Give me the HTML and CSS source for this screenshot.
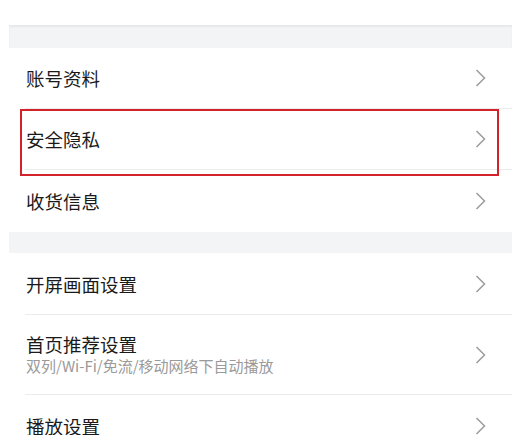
FILE: index.html
```html
<!DOCTYPE html>
<html lang="zh-CN">
<head>
    <meta charset="UTF-8">
    <title>设置</title>
    <link rel="stylesheet" href="styles.css">
</head>
<body>
    <div class="page">
        <div class="band band-top"></div>

        <div class="group">
            <div class="row">
                <div class="row-inner">
                    <span class="title">账号资料</span>
                    <svg class="chevron" viewBox="0 0 10 18"><path d="M1 1 L9 9 L1 17"/></svg>
                </div>
            </div>
            <div class="row highlighted">
                <div class="row-inner">
                    <span class="title">安全隐私</span>
                    <svg class="chevron" viewBox="0 0 10 18"><path d="M1 1 L9 9 L1 17"/></svg>
                </div>
                <div class="mark"></div>
            </div>
            <div class="row last big">
                <div class="row-inner">
                    <span class="title">收货信息</span>
                    <svg class="chevron" viewBox="0 0 10 18"><path d="M1 1 L9 9 L1 17"/></svg>
                </div>
            </div>
        </div>

        <div class="band"></div>

        <div class="group">
            <div class="row big">
                <div class="row-inner">
                    <span class="title">开屏画面设置</span>
                    <svg class="chevron" viewBox="0 0 10 18"><path d="M1 1 L9 9 L1 17"/></svg>
                </div>
            </div>
            <div class="row tall">
                <div class="row-inner">
                    <div class="text">
                        <span class="title">首页推荐设置</span>
                        <span class="sub">双列/Wi-Fi/免流/移动网络下自动播放</span>
                    </div>
                    <svg class="chevron" viewBox="0 0 10 18"><path d="M1 1 L9 9 L1 17"/></svg>
                </div>
            </div>
            <div class="row last big">
                <div class="row-inner">
                    <span class="title">播放设置</span>
                    <svg class="chevron" viewBox="0 0 10 18"><path d="M1 1 L9 9 L1 17"/></svg>
                </div>
            </div>
        </div>
    </div>
</body>
</html>
```

FILE: styles.css
```css
body {
    margin: 0;
    background: #fff;
    font-family: "Noto Sans CJK SC", "Noto Sans", sans-serif;
    color: #1a1a1a;
    overflow: hidden;
}

.page {
    padding: 25px 0 0 9px;
}

.band {
    height: 21px;
    background: #f3f4f5;
}

.band-top {
    height: 23px;
    box-shadow: inset 0 2px 2px rgba(0,0,0,0.05);
}

.row {
    position: relative;
    height: 61px;
    padding-left: 16px;
}

.row.big {
    height: 62px;
}

.row.tall {
    height: 80px;
}

.row-inner {
    height: 100%;
    box-sizing: border-box;
    display: flex;
    align-items: center;
    justify-content: space-between;
    padding: 0 26px 0 1px;
    border-bottom: 1px solid #ececec;
}

.row.last .row-inner {
    border-bottom: none;
}

.title {
    font-size: 18.5px;
    line-height: 24px;
}

.text {
    display: flex;
    flex-direction: column;
    margin-top: -2px;
}

.sub {
    font-size: 15px;
    line-height: 20px;
    color: #9a9a9a;
}

.chevron {
    width: 11px;
    height: 18px;
    fill: none;
    stroke: #9b9b9b;
    stroke-width: 1.5;
}

.mark {
    position: absolute;
    left: 11px;
    right: 13px;
    top: 0;
    bottom: -6px;
    border: 2px solid #d2232a;
}
```
